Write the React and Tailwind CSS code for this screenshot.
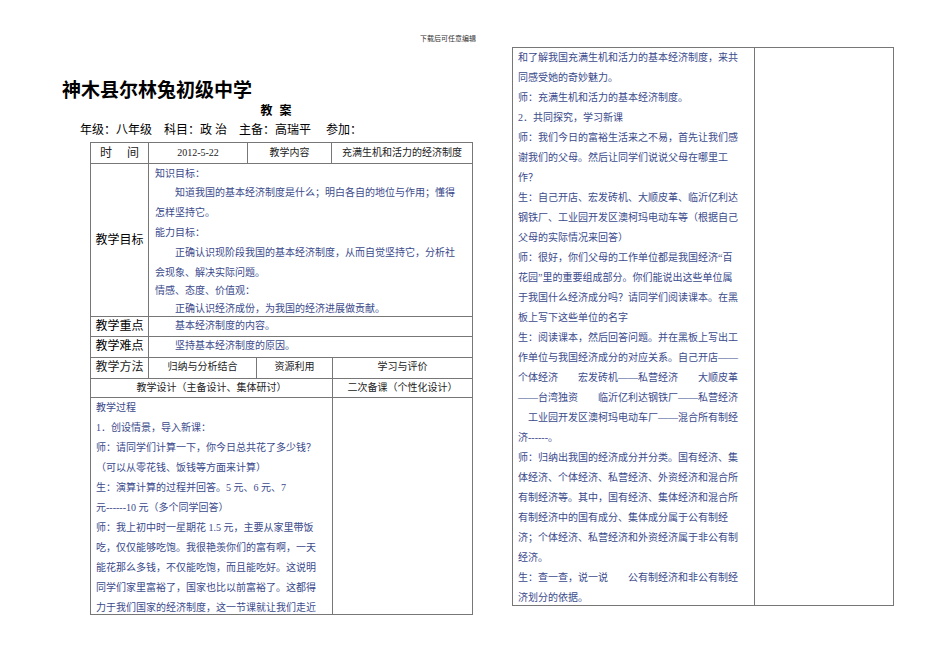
const serif = { fontFamily: '"Liberation Serif","Noto Sans CJK SC",serif' };

const L = ({ children }) => (
  <div className="h-[20px] leading-[20px] whitespace-nowrap">{children}</div>
);

const left = [
  "教学过程",
  "1．创设情景，导入新课：",
  "师：请同学们计算一下，你今日总共花了多少钱？",
  "（可以从零花钱、饭钱等方面来计算）",
  "生：演算计算的过程并回答。5 元、6 元、7",
  "元------10 元（多个同学回答）",
  "师：我上初中时一星期花 1.5 元，主要从家里带饭",
  "吃，仅仅能够吃饱。我很艳羡你们的富有啊，一天",
  "能花那么多钱，不仅能吃饱，而且能吃好。这说明",
  "同学们家里富裕了，国家也比以前富裕了。这都得",
  "力于我们国家的经济制度，这一节课就让我们走近",
];

const right = [
  "和了解我国充满生机和活力的基本经济制度，来共",
  "同感受她的奇妙魅力。",
  "师：充满生机和活力的基本经济制度。",
  "2．共同探究，学习新课",
  "师：我们今日的富裕生活来之不易，首先让我们感",
  "谢我们的父母。然后让同学们说说父母在哪里工",
  "作？",
  "生：自己开店、宏发砖机、大顺皮革、临沂亿利达",
  "钢铁厂、工业园开发区澳柯玛电动车等（根据自己",
  "父母的实际情况来回答）",
  "师：很好，你们父母的工作单位都是我国经济“百",
  "花园”里的重要组成部分。你们能说出这些单位属",
  "于我国什么经济成分吗？请同学们阅读课本。在黑",
  "板上写下这些单位的名字",
  "生：阅读课本，然后回答问题。并在黑板上写出工",
  "作单位与我国经济成分的对应关系。自己开店——",
  "个体经济　　宏发砖机——私营经济　　大顺皮革",
  "——台湾独资　　临沂亿利达钢铁厂——私营经济",
  "　工业园开发区澳柯玛电动车厂——混合所有制经",
  "济------。",
  "师：归纳出我国的经济成分并分类。国有经济、集",
  "体经济、个体经济、私营经济、外资经济和混合所",
  "有制经济等。其中，国有经济、集体经济和混合所",
  "有制经济中的国有成分、集体成分属于公有制经",
  "济；个体经济、私营经济和外资经济属于非公有制",
  "经济。",
  "生：查一查，说一说　　公有制经济和非公有制经",
  "济划分的依据。",
];

const bd = "border-[#777]";

export default function App() {
  return (
    <div className="w-[950px] h-[658px] bg-white relative overflow-hidden text-black" style={serif}>
      <div className="absolute left-[420px] top-[34px] text-[7px] text-[#333]">下载后可任意编辑</div>

      <div className="absolute left-[62px] top-[76px] w-[420px]">
        <div className="text-[19px] font-bold leading-[26px]" style={{ fontFamily: '"Noto Sans CJK SC",sans-serif' }}>神木县尔林兔初级中学</div>
        <div className="text-[12px] font-bold text-center leading-[18px] tracking-[2px] pl-[10px]">教 案</div>
        <div className="text-[12px] leading-[20px] pl-[18px] whitespace-pre">年级：八年级　科目：政 治　主备：高瑞平　 参加：</div>
      </div>

      {/* left table */}
      <div className={`absolute left-[90px] top-[142px] w-[383px] border ${bd} text-[10px]`}>
        <div className={`flex h-[21px] border-b ${bd} leading-[20px] text-[#222]`}>
          <div className={`w-[58px] border-r ${bd} text-center text-[12px] whitespace-pre`}>时　 间</div>
          <div className={`w-[99px] border-r ${bd} text-center`}>2012-5-22</div>
          <div className={`w-[84px] border-r ${bd} text-center`}>教学内容</div>
          <div className="flex-1 text-center whitespace-nowrap">充满生机和活力的经济制度</div>
        </div>
        <div className={`flex h-[153px] border-b ${bd}`}>
          <div className={`w-[58px] border-r ${bd} flex items-center justify-center text-[12px] whitespace-nowrap`}>教学目标</div>
          <div className="flex-1 pl-[6px] pt-[1px] text-[#3b4a8c]">
            <div className="h-[18px] leading-[18px]">知识目标：</div>
            <div className="h-[20px] leading-[20px] pl-[20px] whitespace-nowrap">知道我国的基本经济制度是什么；明白各自的地位与作用；懂得</div>
            <div className="h-[20px] leading-[20px]">怎样坚持它。</div>
            <div className="h-[20px] leading-[20px]">能力目标：</div>
            <div className="h-[20px] leading-[20px] pl-[20px] whitespace-nowrap">正确认识现阶段我国的基本经济制度，从而自觉坚持它，分析社</div>
            <div className="h-[19px] leading-[19px]">会现象、解决实际问题。</div>
            <div className="h-[18px] leading-[18px]">情感、态度、价值观：</div>
            <div className="h-[18px] leading-[18px] pl-[20px]">正确认识经济成份，为我国的经济进展做贡献。</div>
          </div>
        </div>
        <div className={`flex h-[20px] border-b ${bd} leading-[18px]`}>
          <div className={`w-[58px] border-r ${bd} text-center text-[12px] whitespace-nowrap`}>教学重点</div>
          <div className="flex-1 pl-[26px] text-[#3b4a8c]">基本经济制度的内容。</div>
        </div>
        <div className={`flex h-[21px] border-b ${bd} leading-[18px]`}>
          <div className={`w-[58px] border-r ${bd} text-center text-[12px] whitespace-nowrap`}>教学难点</div>
          <div className="flex-1 pl-[26px] text-[#3b4a8c]">坚持基本经济制度的原因。</div>
        </div>
        <div className={`flex h-[21px] border-b ${bd} leading-[18px] text-[#222]`}>
          <div className={`w-[58px] border-r ${bd} text-center text-[12px] whitespace-nowrap`}>教学方法</div>
          <div className={`w-[108px] border-r ${bd} text-center`}>归纳与分析结合</div>
          <div className={`w-[76px] border-r ${bd} text-center`}>资源利用</div>
          <div className="flex-1 text-center">学习与评价</div>
        </div>
        <div className={`flex h-[19px] border-b ${bd} leading-[18px] text-[#222]`}>
          <div className={`w-[242px] border-r ${bd} text-center`}>教学设计（主备设计、集体研讨）</div>
          <div className="flex-1 text-center">二次备课（个性化设计）</div>
        </div>
        <div className="flex h-[216px]">
          <div className={`w-[242px] border-r ${bd} pl-[5px] text-[#3b4a8c] overflow-hidden`}>
            {left.map((t, i) => <L key={i}>{t}</L>)}
          </div>
          <div className="flex-1" />
        </div>
      </div>

      {/* right table */}
      <div className={`absolute left-[512px] top-[47px] w-[382px] h-[559px] border ${bd} flex text-[10px]`}>
        <div className={`w-[242px] border-r ${bd} pl-[5px] text-[#3b4a8c] overflow-hidden`}>
          {right.map((t, i) => <L key={i}>{t}</L>)}
        </div>
        <div className="flex-1" />
      </div>
    </div>
  );
}
